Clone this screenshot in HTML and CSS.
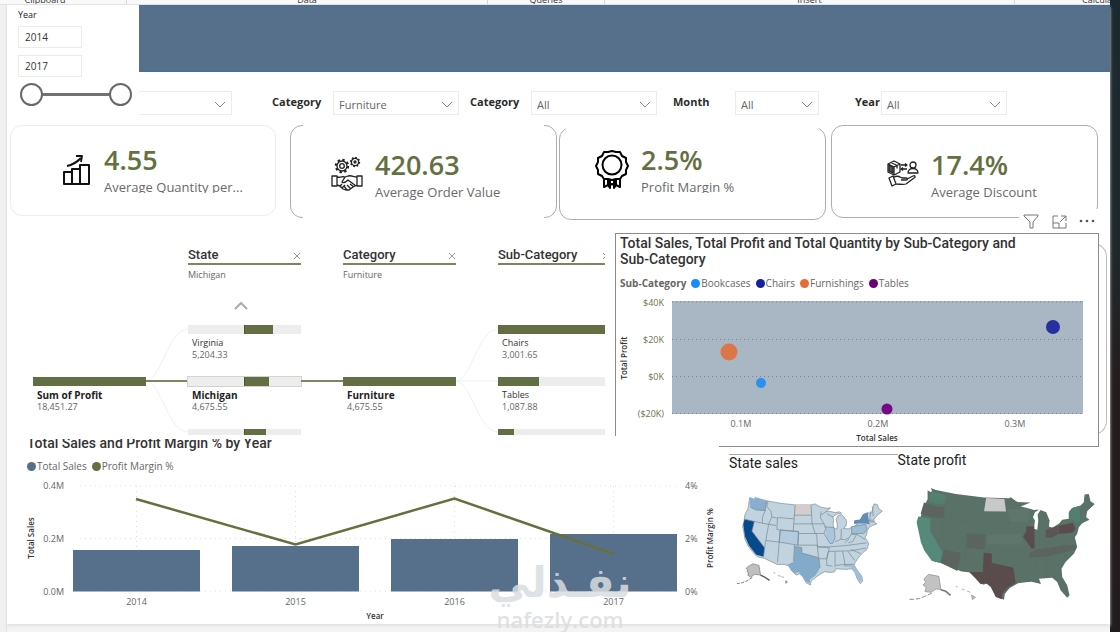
FILE: index.html
```html
<!DOCTYPE html>
<html lang="en">
<head>
<meta charset="utf-8">
<title>Sales dashboard</title>
<link rel="stylesheet" href="styles.css">
</head>
<body>
<div class="app">
  <div class="ribbon">
    <span class="ribbon-group ribbon-clipboard">Clipboard</span>
    <span class="ribbon-group">Data</span>
    <span class="ribbon-group">Queries</span>
    <span class="ribbon-group">Insert</span>
    <span class="ribbon-group ribbon-calc">Calculations</span>
  </div>
  <div class="desk-edge"></div>
  <div class="rail"></div>
  <main class="report">
    <section class="top">
      <div class="slicer">
        <label class="slicer-label" for="year-from">Year</label>
        <input class="year-box" id="year-from" type="text" value="2014">
        <input class="year-box" id="year-to" type="text" value="2017" aria-label="Last year">
        <div class="range">
          <input class="range-input" type="range" min="2014" max="2017" value="2014" aria-label="From year">
          <input class="range-input" type="range" min="2014" max="2017" value="2017" aria-label="To year">
        </div>
      </div>
      <div class="top-main">
        <div class="banner"></div>
        <div class="filters">
          <div class="drop drop-first"><select aria-label="Region"><option></option></select><svg class="chev" viewBox="0 0 12 8"><path d="M1 1l5 5 5-5"/></svg></div>
          <label class="filter-label label-cat" for="f-cat">Category</label>
          <div class="drop drop-wide"><select id="f-cat"><option>Furniture</option></select><svg class="chev" viewBox="0 0 12 8"><path d="M1 1l5 5 5-5"/></svg></div>
          <label class="filter-label label-sub" for="f-sub">Category</label>
          <div class="drop drop-wide"><select id="f-sub"><option>All</option></select><svg class="chev" viewBox="0 0 12 8"><path d="M1 1l5 5 5-5"/></svg></div>
          <label class="filter-label label-month" for="f-month">Month</label>
          <div class="drop drop-month"><select id="f-month"><option>All</option></select><svg class="chev" viewBox="0 0 12 8"><path d="M1 1l5 5 5-5"/></svg></div>
          <label class="filter-label label-year" for="f-year">Year</label>
          <div class="drop drop-wide"><select id="f-year"><option>All</option></select><svg class="chev" viewBox="0 0 12 8"><path d="M1 1l5 5 5-5"/></svg></div>
        </div>
      </div>
    </section>

    <section class="cards">
      <article class="card card-quantity">
        <svg class="card-icon" width="30" height="34" viewBox="0 0 30 34" fill="none" stroke="#111" stroke-width="2" stroke-linejoin="round"><path d="M2 20h8v12H2zM10 17h8v15h-8zM18 13h9v19h-9z"/><path d="M5 14c6-1 10-4 14-8" stroke-width="2.2"/><path d="M14 4l6 0-1 6" stroke-width="1.8"/></svg>
        <div class="card-body"><strong class="card-value">4.55</strong><span class="card-name card-name-cut">Average Quantity per...</span></div>
      </article>
      <article class="card card-order">
        <svg class="card-icon" width="32" height="36" viewBox="0 0 32 36" fill="none" stroke="#222" stroke-width="1.3" stroke-linejoin="round"><circle cx="11" cy="10" r="5" /><circle cx="11" cy="10" r="6.2" stroke-dasharray="2.4 2.4" stroke-width="2"/><circle cx="11" cy="10" r="2.3"/><circle cx="24" cy="6" r="3.6"/><circle cx="24" cy="6" r="4.4" stroke-dasharray="1.7 1.7" stroke-width="1.6"/><circle cx="24" cy="6" r="1"/><path d="M1 20h5v10H1zM26 20h5v10h-5zM6 21c4 1 5-1 8 0l3-1c4-1 5 1 9 1M6 29c3 0 4 2 6 4l3 1 3 0 4-3 4-2M14 21l-3 5c2 2 4 0 6-2l8 6M19 28l4 3M16 29l4 4M13 30l3 4M9 30l2-2M11 32l3-3"/></svg>
        <div class="card-body"><strong class="card-value">420.63</strong><span class="card-name">Average Order Value</span></div>
      </article>
      <article class="card card-profit">
        <svg class="card-icon" width="34" height="40" viewBox="0 0 34 40" fill="none" stroke="#000" stroke-width="2" stroke-linejoin="round"><path d="M17 2l4 1 4 0 2 4 4 2 0 4 2 4-2 4 0 4-4 2-2 3-4 0-4 1-4-1-4 0-2-3-4-2 0-4-2-4 2-4 0-4 4-2 2-4 4 0z"/><circle cx="17" cy="16" r="9.5"/><path d="M9 29v9l4-2 2 3v-9M25 29v9l-4-2-2 3v-9M13 30v6M21 30v6M15 36l2-1 2 1"/></svg>
        <div class="card-body"><strong class="card-value">2.5%</strong><span class="card-name card-name-cut">Profit Margin %</span></div>
      </article>
      <article class="card card-discount">
        <svg class="card-icon" width="32" height="28" viewBox="0 0 32 28" fill="none" stroke="#222" stroke-width="1.3" stroke-linejoin="round"><path d="M1 4l6-3 6 3v8l-6 3-6-3zM1 4l6 3 6-3M7 7v8M4 2.500l6 3v3"/><path d="M2 5l4 2v6l-4-2z" fill="#555"/><path d="M14 5h6M18 3.500l2 1.500-2 1.500M20 9h-6M16 7.500L14 9l2 1.500"/><circle cx="26" cy="5" r="3"/><path d="M21 13c0-6 10-6 10 0zM2 18l4-2 3 8-4 2zM7 17c4-2 6 0 8 1h4c2 0 2 2 0 2h-5M20 19l6-3c2-1 3 1 1 2l-8 6c-3 1-6 0-10 0"/></svg>
        <div class="card-body"><strong class="card-value">17.4%</strong><span class="card-name">Average Discount</span></div>
      </article>
    </section>

    <section class="visuals">
      <div class="tree">
        <div class="tree-col tree-root">
          <div class="node node-on"><div class="bar"><i class="fill fill-all"></i></div><b>Sum of Profit</b><span>18,451.27</span></div>
        </div>
        <svg class="links" viewBox="0 0 42 201" fill="none"><path d="M0 146c16-2 22-52 42-52M0 146c16 2 22 51 42 51" stroke="#f0f0f0"/><path d="M0 146h42" stroke="#7d8560" stroke-width="2"/></svg>
        <div class="tree-col">
          <div class="tree-head"><span>State</span><button type="button" aria-label="Remove State"><svg viewBox="0 0 8 8"><path d="M1 1l6 6M7 1L1 7"/></svg></button></div>
          <div class="tree-pick">Michigan</div>
          <button class="tree-up" type="button" aria-label="Scroll up"><svg viewBox="0 0 14 8"><path d="M1 7l6-6 6 6"/></svg></button>
          <div class="node"><div class="bar"><i class="fill fill-mid" style="width:25%"></i></div><b>Virginia</b><span>5,204.33</span></div>
          <div class="node node-on"><div class="bar bar-edge"><i class="fill fill-mid" style="width:22%"></i></div><b>Michigan</b><span>4,675.55</span></div>
          <div class="node"><div class="bar"><i class="fill fill-mid" style="width:19%"></i></div></div>
        </div>
        <svg class="links" viewBox="0 0 42 201" fill="none"><path d="M0 146h42" stroke="#7d8560" stroke-width="2"/></svg>
        <div class="tree-col">
          <div class="tree-head"><span>Category</span><button type="button" aria-label="Remove Category"><svg viewBox="0 0 8 8"><path d="M1 1l6 6M7 1L1 7"/></svg></button></div>
          <div class="tree-pick">Furniture</div>
          <div class="node node-on node-single"><div class="bar"><i class="fill fill-all"></i></div><b>Furniture</b><span>4,675.55</span></div>
        </div>
        <svg class="links" viewBox="0 0 42 201" fill="none"><path d="M0 146c16-2 22-52 42-52M0 146c16 2 22 51 42 51M0 146h42" stroke="#f0f0f0"/></svg>
        <div class="tree-col tree-col-last">
          <div class="tree-head"><span>Sub-Category</span><button type="button" aria-label="Remove Sub-Category"><svg viewBox="0 0 8 8"><path d="M1 1l6 6M7 1L1 7"/></svg></button></div>
          <div class="tree-pick"></div>
          <div class="node node-first"><div class="bar"><i class="fill fill-all"></i></div><b>Chairs</b><span>3,001.65</span></div>
          <div class="node"><div class="bar"><i class="fill" style="width:38%"></i></div><b>Tables</b><span>1,087.88</span></div>
          <div class="node"><div class="bar"><i class="fill" style="width:15%"></i></div></div>
        </div>
      </div>

      <div class="scatter">
        <div class="tools">
          <button type="button" aria-label="Filters"><svg width="16" height="16" viewBox="0 0 16 16"><path d="M1 2h14v1L10 9v6H7V9L1 3z"/></svg></button>
          <button type="button" aria-label="Focus mode"><svg width="16" height="16" viewBox="0 0 16 16"><path d="M7 3H2v12h13V10M2 10h6v5M10 3h5v5M15 3L9 9"/></svg></button>
          <button type="button" aria-label="More options"><svg width="16" height="16" viewBox="0 0 16 16"><g fill="#555" stroke="none"><circle cx="2" cy="8" r="1.300"/><circle cx="8" cy="8" r="1.300"/><circle cx="14" cy="8" r="1.300"/></g></svg></button>
        </div>
        <div class="scatter-panel">
          <h2 class="title">Total Sales, Total Profit and Total Quantity by Sub-Category and Sub-Category</h2>
          <ul class="legend">
            <li class="legend-name">Sub-Category</li>
            <li><i class="dot dot-bookcases"></i>Bookcases</li>
            <li><i class="dot dot-chairs"></i>Chairs</li>
            <li><i class="dot dot-furnishings"></i>Furnishings</li>
            <li><i class="dot dot-tables"></i>Tables</li>
          </ul>
          <svg class="plot" viewBox="616 292 482 153">
            <rect x="672" y="301" width="411" height="113" fill="#a9b7c5"/>
            <path d="M672 302h411M672 339.500h411M672 376.500h411M672 413.500h411" stroke="#75838f" stroke-dasharray="1 3"/>
            <circle cx="729" cy="352" r="8.500" fill="#dc7646"/>
            <circle cx="761" cy="383" r="5" fill="#2b8ff0"/>
            <circle cx="887" cy="409" r="5.500" fill="#750985"/>
            <circle cx="1053" cy="327" r="7" fill="#26309f"/>
            <g class="axis axis-olive" text-anchor="end"><text x="664" y="306">$40K</text><text x="664" y="343">$20K</text><text x="664" y="380">$0K</text><text x="664" y="417">($20K)</text></g>
            <g class="axis" text-anchor="middle"><text x="741" y="427">0.1M</text><text x="878" y="427">0.2M</text><text x="1015" y="427">0.3M</text></g>
            <g class="axis-title" text-anchor="middle"><text x="877" y="441">Total Sales</text><text transform="translate(627 358) rotate(-90)">Total Profit</text></g>
          </svg>
        </div>
      </div>

      <div class="combo">
        <h2 class="title title-cut"><span>Total Sales and Profit Margin % by Year</span></h2>
        <ul class="legend legend-combo">
          <li><i class="dot dot-sales"></i>Total Sales</li>
          <li><i class="dot dot-margin"></i>Profit Margin %</li>
        </ul>
        <svg class="plot" viewBox="7 476 712 148">
          <path d="M80 486h598M80 538.500h598M80 591h598M136.500 486v64M295.500 486v60M454.500 486v52M613.500 486v48" fill="none" stroke="#dcdcdc" stroke-dasharray="1 4"/>
          <path d="M73 550h127v41.500H73zM232 546h127v45.500H232zM391 539h127v52.500H391zM550 534h127v57.500H550z" fill="#56708c"/>
          <path d="M136 499l159.500 45.500L454.500 498.500 614 554" fill="none" stroke="#66703f" stroke-width="2.500"/>
          <g class="axis" text-anchor="end"><text x="64" y="489">0.4M</text><text x="64" y="542">0.2M</text><text x="64" y="595">0.0M</text></g>
          <g class="axis"><text x="685" y="489">4%</text><text x="685" y="542">2%</text><text x="685" y="595">0%</text></g>
          <g class="axis" text-anchor="middle"><text x="136.500" y="605">2014</text><text x="295.500" y="605">2015</text><text x="454.500" y="605">2016</text><text x="613.500" y="605">2017</text></g>
          <g class="axis-title" text-anchor="middle"><text x="375" y="619">Year</text><text transform="translate(34 538) rotate(-90)">Total Sales</text><text transform="translate(713 538) rotate(-90)">Profit Margin %</text></g>
        </svg>
        <div class="watermark"><span class="mark-ar" lang="ar" dir="rtl">نفـذلي</span><span class="mark-en">nafezly.com</span></div>
      </div>

      <div class="maps">
        <div class="map map-sales">
          <h2 class="title">State sales</h2>
          <svg viewBox="26 4 507 360" stroke-linejoin="round">
            <path fill="#c0d3df" stroke="#7d8a93" stroke-width="2" d="M88 84l16 6 0-6 37 10 39 7 45 5h48l12-3 15 9 18 4 14-1-16 12 12-2 17 4 13-2 6 3-14 4-12 8 3 8-2 15 3 13 9 0 1-13-4-15 6-12 11-3 9 10 6 10-2 15-8 7 15 1 14-6 14-7-10-3 1-5 16-4 10-17 13-6 12 0 4-14 3-13 10 2 5 13 10 7-15 12-10 12 1 9 8 5-14 5-9 5-6 10-2 12-5 10 8 10 3 10-5 15-13 10-13 15-10 15-2 8 10 17 12 15 3 15-7 8-10-16-6-17-10-12-17 2-30-2-5 10-15 1-15-2-10 6-15 10-15 12-2 12-13-7-8-15-12-12-10 4-13-12-9-15-13-5h-22l-38-18-22-5-12-12-15-20-10-20-3-20-4-20 4-15 3-20 10-20z"/>
            <path fill="#89aed0" d="M88 84l16 6 0-6 35 10-4 29-28-2-17-8z"/>
            <path fill="#064a8b" d="M73 149l29 7-7 29 38 50-3 27-22-6-22-28-12-28-5-35z"/>
            <path fill="#82aac9" d="M223 231l22 3v17l51 14 4 30-14 23-16 12-2 12-13-7-8-15-12-12-10 4-13-12-9-15 18-8z"/>
            <path fill="#5f8db5" d="M402 162l1-10 17-2 9-16 13-5 6 35-11-2z"/>
            <path fill="#b2cbdd" d="M180 182l55 5-2 39-56-8z"/>
            <path fill="#aac6dc" d="M316 173l26 1 3 31-7 17-8 0-12-22z"/>
            <path fill="#9fbdd5" d="M395 170l42-6 3 15-8 12-37 3zM402 284l10 18 11 14 3 15-8 7-16-33-11-12-20 0 1-9z"/>
            <path fill="#d3cdcb" d="M225 106h48l2 31h-53z"/>
            <path fill="none" stroke="#768791" stroke-width="2" d="M90 113l17 8 28 2 4-29M135 123l-8 18-1 20M73 149l53 12 42 7M102 156l-7 29 38 50M143 95l-3 16 12 14 3 17 15 4M155 142l-10 23-12 70-3 27M172 144l50 4-3 37-49-5zM225 106l-3 42M222 137h53M273 106l3 57M220 163l58 0h34M219 185l16 1v6h50l-7-22-2-7M180 182l55 4-2 41-56-9zM180 182l-8 96M137 213l40 5M223 226l-3 50M223 231l22 3v17l51 14 4 30M233 227h59l3 38M235 192l-2 35M285 192l5 4 2 36h40M303 126l-2 19 11 18 6 12-6 17h-27M312 172l30 2M316 128l-12 8M345 205l-7 17-8 0-18-30M342 174l3 31M364 178l-1 31 12 2 12-6 8-12v-21M345 217l18-8M332 232l48-4 60-8M325 246l67-2 46-8M292 232l36 3-8 33h-24M325 246l-5 22v20l17 2M345 246v47M368 246l7 39-27 3M375 286l26-2M384 246l20 27M392 240l30 12M395 172l42-8 4 15-8 12-38 3M387 208l-12 12M395 194l15 0-12 22-13 4M410 194l25 16M442 129l2 24 5 12M452 125l-3 32h14M444 152h16M457 110l3 30M320 133l20 10"/>
            <g fill="#bfc0be" stroke="#777" stroke-width="2"><path d="M84 291l14-8 18 5 5 29-18-2-12 8-9-6 4-7-6-3 3-6-6-4z"/><path d="M160 310l5 1M174 318l7 3M184 322l7 2M196 334l6 4-5 4z"/></g>
            <path fill="none" stroke="#555" stroke-width="4" d="M121 317l12 6 15 10"/>
            <path fill="none" stroke="#777" stroke-width="3" stroke-dasharray="10 4" d="M96 324l-15 10-15 6-16 3"/>
          </svg>
        </div>
        <div class="map map-profit">
          <h2 class="title">State profit</h2>
          <svg viewBox="6 -8 606 426" stroke-linejoin="round">
            <path fill="#5a7168" d="M105 52l15 6 60 12 85 11 75 2 5-3 20 14 40 2-30 12 20 4 20 6 15-1-12 8-6 15 6 10-3 25 10 3 3-28-2-18 9-14 17 7 6 15 4 10-2 18 10 4 20-12 10-12 20-3v-20l10-13 25-7 10-10 2-23 13-2 5 22 13 8-23 22-3 18 10 8-22 10-10 12-5 20-7 10 7 30-10 20-25 25-12 20 2 25 15 25 7 30-7 7-20-22-10-25-15-13-40 3 6 16-28-7-18 2-23 3-25 14-15 18-2 17-18-7-15-30-15-12-15 4-15-17-20-20-30-3-55-24-27-6-23-32-10-25-10-40-3-20 13-45 13-25 0-27 16 10z"/>
            <path fill="#528070" d="M105 62l45 12-4 24-26 2-22-8zM520 145v-20l10-13 22-6 2 42-8 10-14-10z"/>
            <path fill="#568979" d="M67 138l37 6-2 36 38 66-8 31-24-5-23-32-10-25-13-60z"/>
            <path fill="#5b645f" d="M84 96l-10 34 34 10 36 2 1-32-32-4zM145 238l50 10-10 54-50-24zM213 188l56 4-3 46-53-6zM400 250l20-12 80-12 42-4-2 15-90 22-50 3z"/>
            <path fill="#5a4b4d" d="M264 246l24 4v27l65 15 7 46-25 14-15 18-2 17-18-7-15-30-15-12-15 4-15-17-20-20 41 0zM392 168l24 0 1 64-8 4-27-38 10-16zM488 166l44-9 8 18-10 12-40 3z"/>
            <path fill="#5b5655" d="M450 178l38-12 2 24-22 12-18-2z"/>
            <path fill="#648071" opacity=".4" d="M335 115l68 0-6 42-54-1zM275 190l100-2 10 32-110 0z"/>
            <path fill="#c8c8c8" d="M271 82l55 3 5 38-66-1z"/>
            <path fill="none" stroke="#4f625b" opacity=".4" d="M148 98l-7 92M213 188l-6 114M150 145l62 6M275 155h112M275 190l95-1M270 238l115 3M430 175l2 55M460 246l-7 76M420 260l5 65"/>
            <g fill="#c2c2c2" stroke="#888" stroke-width="2"><path d="M84 325l14-13 31 6 6 40-14-2-16 10-18-2 4-14-10-6 8-8z"/><path d="M180 348l5 2M198 356l8 3M214 362l9 4M227 374l12 7-9 7z"/></g>
            <path fill="none" stroke="#777" stroke-width="5" d="M135 358l15 5 14 12"/>
            <path fill="none" stroke="#888" stroke-width="3" stroke-dasharray="14 5" d="M108 368l-14 7-24 10-18 2-14 0"/>
          </svg>
        </div>
      </div>
    </section>
  </main>
</div>
</body>
</html>
```
FILE: styles.css
```css
* { box-sizing: border-box; }
body {
  margin: 0;
  background: #f4f4f4;
  color: #333;
  font: 9px/12px "Open Sans", "Noto Sans", sans-serif;
}
button { padding: 0; border: 0; background: none; display: flex; }
h2, ul { margin: 0; padding: 0; }

.app {
  display: grid;
  grid-template-columns: 7px minmax(0, 1fr) 10px;
  grid-template-rows: 5px 1fr;
  min-height: 100vh;
}
.ribbon {
  grid-column: 1 / 3;
  display: grid;
  grid-template-columns: minmax(0, 127fr) minmax(0, 361fr) minmax(0, 117fr) minmax(0, 410fr) minmax(0, 95fr);
  align-items: end;
  overflow: hidden;
  background: #f9f9f9;
  border-bottom: 1px solid #e2e2e2;
}
.ribbon-group {
  overflow: hidden;
  border-right: 1px solid #d5d5d5;
  line-height: 9px;
  text-align: center;
  white-space: nowrap;
}
.ribbon-clipboard { padding-right: 36px; }
.ribbon-calc { padding-left: 67px; border: 0; text-align: left; }
.desk-edge {
  grid-column: 3;
  grid-row: 1 / 3;
  background: linear-gradient(#1b2a30, #20282a 40%, #241d1e 60%, #211c1d);
}
.rail { background: #f0f0ee; border-right: 1px solid #e2e2e0; }
.report { position: relative; align-self: start; background: #fff; box-shadow: 0 2px 3px #e2e2e2; }

/* year slicer, banner and filters */
.top { display: grid; grid-template-columns: 132px minmax(0, 1fr); height: 120px; }
.slicer { display: flex; flex-direction: column; align-items: flex-start; padding: 4px 0 0 11px; }
.slicer-label { line-height: 12px; color: #222; }
.year-box {
  width: 64px;
  height: 22px;
  margin-top: 5px;
  padding: 0 6px;
  border: 1px solid #ebebeb;
  background: #fff;
  color: #333;
  font: 10px "Open Sans", sans-serif;
}
.year-box + .year-box { margin-top: 7px; }
.range { position: relative; width: 112px; height: 22px; margin: 6px 0 0 2px; }
.range::before {
  content: "";
  position: absolute;
  inset: 10px 11px auto;
  height: 3px;
  background: #757170;
}
.range-input {
  position: absolute;
  inset: 0;
  width: 100%;
  height: 22px;
  margin: 0;
  appearance: none;
  background: none;
  pointer-events: none;
}
.range-input::-webkit-slider-thumb {
  appearance: none;
  width: 23px;
  height: 23px;
  border: 2px solid #6b6767;
  border-radius: 50%;
  background: #fff;
  pointer-events: auto;
}
.banner { height: 67px; background: #56708c; border-top: 1px solid #3f72a0; border-bottom: 1px solid #3f72a0; }
.filters { display: flex; align-items: flex-start; padding-top: 19px; }
.filter-label { font: 700 11px/22px "Open Sans", sans-serif; color: #2b2b2b; white-space: nowrap; }
.label-cat { width: 61px; margin-left: 40px; }
.label-sub { width: 61px; margin-left: 11px; }
.label-month { width: 62px; margin-left: 16px; }
.label-year { width: 26px; margin-left: 36px; }
.drop { position: relative; height: 24px; border: 1px solid #ececec; }
.drop select {
  width: 100%;
  height: 100%;
  padding: 2px 5px 0;
  border: 0;
  appearance: none;
  background: none;
  color: #666;
  font: 11px "Open Sans", sans-serif;
}
.drop-first { width: 93px; border-left: 0; }
.drop-wide { width: 126px; }
.drop-month { width: 84px; }
.chev {
  position: absolute;
  right: 5px;
  top: 9px;
  width: 12px;
  height: 8px;
  fill: none;
  stroke: #888;
  pointer-events: none;
}

/* headline numbers */
.cards {
  display: grid;
  grid-template-columns: minmax(0, 280fr) minmax(0, 269fr) minmax(0, 272fr) minmax(0, 267fr);
  align-items: start;
  height: 95px;
  padding: 0 12px 0 3px;
}
.card {
  position: relative;
  display: flex;
  height: 93px;
  border: 1px solid #adadad;
  border-radius: 12px;
}
.card-icon, .card-body { position: relative; }
.card-icon { flex: none; margin-right: 12px; }
.card-body { display: flex; flex-direction: column; }
.card-value { font: 600 27px/34px "Open Sans", sans-serif; color: #64703f; }
.card-name { font: 13px/20px "Open Sans", sans-serif; color: #6a6a6a; white-space: nowrap; }
.card-name-cut { height: 14px; margin-top: 2px; overflow: hidden; line-height: 17px; }
.card-quantity { height: 91px; margin-right: 14px; padding: 17px 0 0 51px; border-color: #ececec; }
.card-quantity .card-icon { margin-top: 9px; }
.card-order { margin-right: 2px; padding: 22px 0 0 40px; }
.card-order .card-icon { margin-top: 8px; }
.card-profit { margin: 2px 5px 0 0; padding: 15px 0 0 35px; }
.card-profit .card-icon { margin-top: 6px; }
.card-discount { padding: 22px 0 0 55px; }
.card-discount .card-icon { margin-top: 12px; }
.card-order::before, .card-profit::before {
  content: "";
  position: absolute;
  inset: -1px 12px;
  background: #fff;
}
.card-profit::before { inset: -1px 6px auto; height: 4px; }

/* lower area */
.visuals {
  display: grid;
  grid-template-columns: minmax(0, 608fr) minmax(0, 104fr) minmax(0, 391fr);
  grid-template-rows: 216px auto;
}
.title { font: 500 14px/16px Roboto, sans-serif; color: #333; }

.tree {
  display: flex;
  height: 200px;
  margin: 15px 10px 0 26px;
  overflow: hidden;
}
.tree-col { flex: 0 0 113px; }
.tree-col-last { flex: 1 1 0; min-width: 0; overflow: hidden; }
.links { flex: none; width: 42px; height: 201px; }
.tree-root { padding-top: 142px; }
.tree-head {
  display: flex;
  align-items: center;
  justify-content: space-between;
  height: 30px;
  padding-top: 12px;
  border-bottom: 2px solid #7d8560;
  font: 500 13px/16px Roboto, sans-serif;
  color: #333;
}
.tree-head svg { width: 8px; height: 8px; margin-top: 2px; fill: none; stroke: #999; }
.tree-col-last .tree-head button { margin-right: -5px; }
.tree-pick { height: 37px; padding-top: 4px; color: #666; }
.tree-up { margin: 0 auto 15px 46px; }
.tree-up svg { width: 14px; height: 8px; fill: none; stroke: #aaa; stroke-width: 2; }
.node { height: 52px; color: #666; }
.node b, .node span { display: block; padding-left: 4px; }
.node b { margin-top: 3px; font-weight: 400; color: #333; }
.node-on b { font-size: 10px; font-weight: 700; color: #222; }
.node-first { margin-top: 23px; }
.node-single { margin-top: 75px; }
.bar { height: 9px; background: #ededed; }
.bar-edge { box-shadow: 0 0 0 1px #d3d3cf; }
.fill { display: block; height: 9px; background: #626e43; }
.fill-all { width: 100%; }
.fill-mid { margin-left: 50%; box-shadow: -1px 0 #4c5734; }

.scatter { grid-column: 2 / 4; position: relative; margin: 13px 11px -11px 0; }
.scatter::before {
  content: "";
  position: absolute;
  inset: 10px -8px 12px auto;
  width: 24px;
  border: 1px solid #bbb;
  border-left: 0;
  border-radius: 0 14px 14px 0;
}
.scatter-panel { position: relative; height: 214px; border: 1px solid #8c8c8c; background: #fff; }
.scatter-panel .title { padding: 1px 60px 0 4px; }
.legend {
  display: flex;
  align-items: center;
  gap: 5px;
  height: 18px;
  margin: 7px 0 0 4px;
  color: #666;
  font-size: 10px;
  list-style: none;
}
.legend li { display: flex; align-items: center; gap: 1px; white-space: nowrap; }
.legend-name { font-weight: 700; }
.dot { width: 9px; height: 9px; border-radius: 50%; }
.dot-bookcases { background: #118dff; }
.dot-chairs { background: #12239e; }
.dot-furnishings { background: #e66c37; }
.dot-tables { background: #6b007b; }
.dot-sales { background: #56708c; }
.dot-margin { background: #66703f; }
.plot { display: block; width: 100%; }
.axis { font-size: 9px; fill: #666; }
.axis-olive { fill: #6c7350; }
.axis-title { font-size: 8px; font-weight: 600; fill: #333; }
.tools {
  position: absolute;
  right: 0;
  bottom: 100%;
  z-index: 1;
  display: flex;
  gap: 12px;
  padding: 4px;
  background: #fff;
}
.tools svg { fill: none; stroke: #777; }

.combo { grid-column: 1 / 3; position: relative; background: #fff; padding-top: 3px; }
.title-cut {
  display: flex;
  align-items: flex-end;
  height: 12px;
  margin-left: 20px;
  overflow: hidden;
}
.legend-combo { margin: 6px 0 1px 20px; }
.watermark {
  position: absolute;
  left: 485px;
  bottom: -7px;
  display: flex;
  flex-direction: column;
  align-items: center;
  width: 136px;
  color: rgba(218, 221, 223, .85);
  white-space: nowrap;
}
.mark-ar { font: 700 42px/48px "DejaVu Sans", sans-serif; }
.mark-en { font: 600 22px/24px "Open Sans", sans-serif; }

.maps { display: flex; align-items: flex-start; padding: 16px 11px 0 10px; }
.map .title { font-weight: 400; color: #222; }
.map svg { display: block; width: 100%; }
.map-sales { flex: 169 1 0; }
.map-sales .title { margin-top: 2px; border-top: 1px solid #aaa; }
.map-profit { flex: 202 1 0; }
```
